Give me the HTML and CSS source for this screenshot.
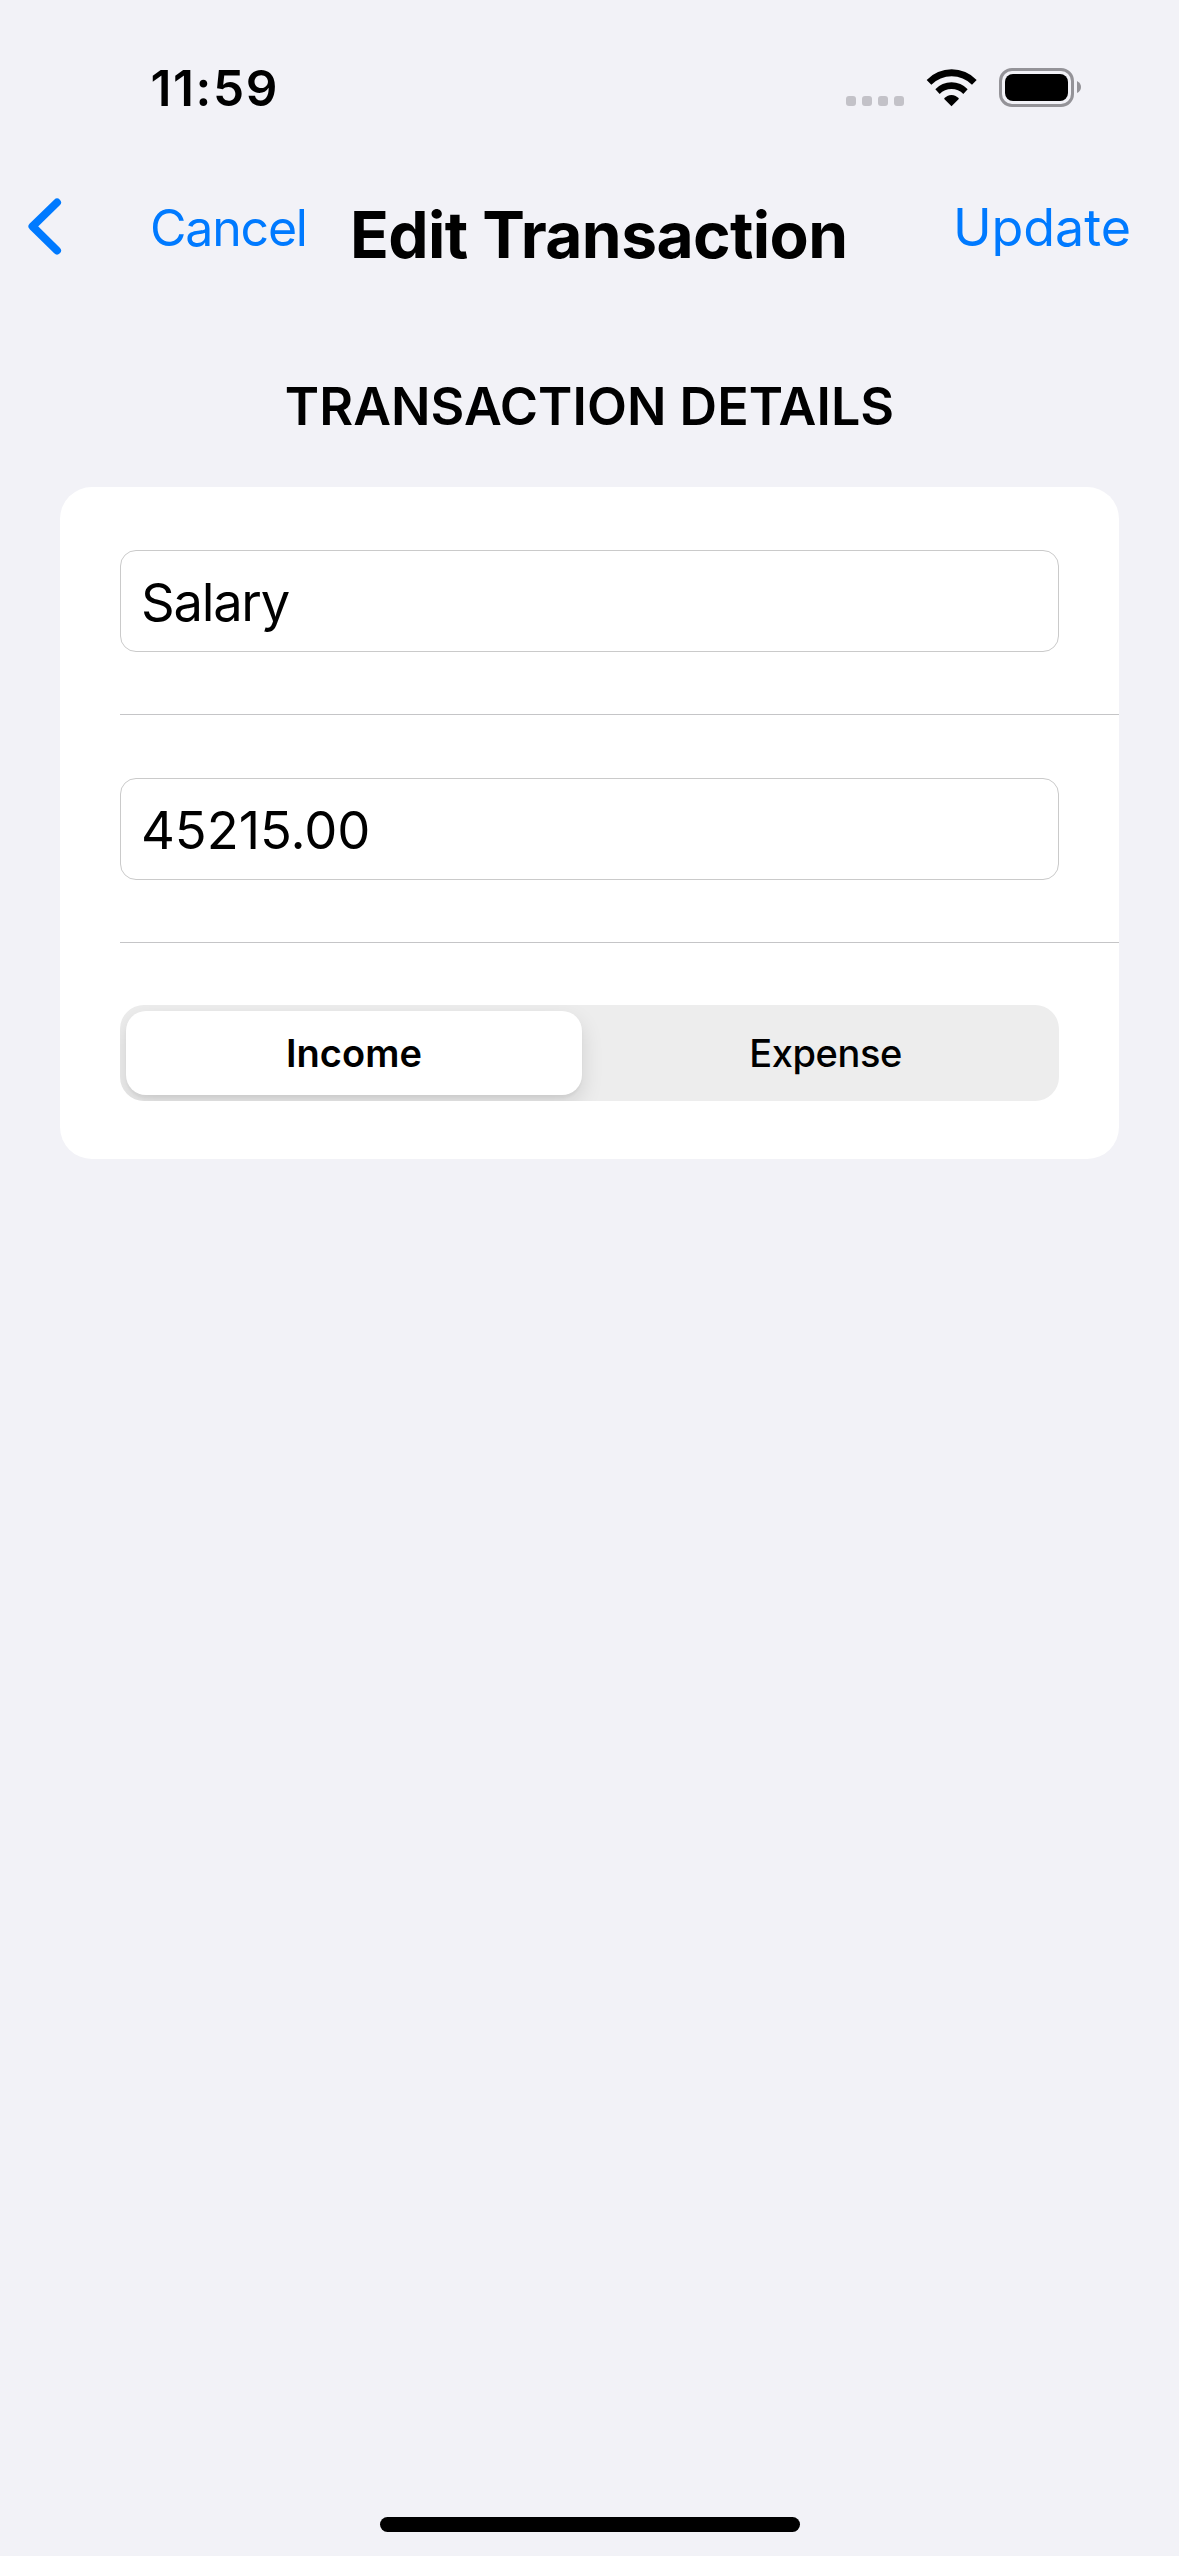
FILE: index.html
```html
<!DOCTYPE html>
<html lang="en">
<head>
<meta charset="utf-8">
<title>Edit Transaction</title>
<link rel="stylesheet" href="styles.css">
</head>
<body>
<header class="status">
  <div class="time">11:59</div>
  <div class="signal"><i></i><i></i><i></i><i></i></div>
  <svg class="wifi" viewBox="318 86 153 114" aria-hidden="true">
    <path d="M320 119A104 104 0 0 1 470 119L456 133A87 87 0 0 0 334 133Z"/>
    <path d="M346 147A66 66 0 0 1 443 147L430 161A49.5 49.5 0 0 0 359 161Z"/>
    <path d="M372 175A29 29 0 0 1 417 175L394.500 198Z"/>
  </svg>
  <div class="battery"><div class="charge"></div></div>
  <svg class="nub" viewBox="0 0 4 12" aria-hidden="true"><path d="M0 0Q4 2 4 6T0 12Z"/></svg>
</header>
<nav class="nav">
  <svg class="back" viewBox="0 0 34 57" aria-hidden="true"><path d="M29 4.500L4.500 28.300L29 52.500"/></svg>
  <a class="cancel">Cancel</a>
  <h1 class="title">Edit Transaction</h1>
  <a class="update">Update</a>
</nav>
<main>
  <h2 class="section">TRANSACTION DETAILS</h2>
  <section class="card">
    <div class="row"><div class="field name">Salary</div></div>
    <div class="row"><div class="field amount">45215.00</div></div>
    <div class="segmented">
      <div class="segment selected">Income</div>
      <div class="segment">Expense</div>
    </div>
  </section>
</main>
<div class="home"></div>
</body>
</html>
```
FILE: styles.css
```css
* { box-sizing: border-box; }

body {
  margin: 0;
  width: 1179px;
  height: 2556px;
  display: flex;
  flex-direction: column;
  background: #f2f2f7;
  color: #000;
  font-family: Inter, "Liberation Sans", sans-serif;
}

h1, h2 { margin: 0; }

.status {
  display: flex;
  align-items: flex-start;
  height: 170px;
  padding: 58px 98px 0 150.500px;
}

.time {
  flex: 1;
  font-size: 49.5px;
  font-weight: 600;
  line-height: 60px;
  letter-spacing: 1.6px;
}

.signal {
  display: flex;
  gap: 6px;
  margin-top: 38px;
}

.signal i {
  width: 10px;
  height: 10px;
  border-radius: 3px;
  background: #c3c2c8;
}

.wifi {
  width: 51px;
  height: 38px;
  margin: 10.700px 0 0 22px;
}

.battery {
  width: 75px;
  height: 39px;
  margin: 10px 0 0 22px;
  padding: 3px;
  border: 3px solid #949398;
  border-radius: 13px;
}

.charge {
  height: 27px;
  border-radius: 8px;
  background: #000;
}

.nub {
  width: 4px;
  height: 12px;
  margin: 23px 0 0 3px;
  fill: #949398;
}

.nav {
  display: flex;
  align-items: flex-start;
  height: 200px;
  padding: 28px 48px 0 27.500px;
}

.back {
  width: 34px;
  height: 57px;
  fill: none;
  stroke: #007aff;
  stroke-width: 8;
  stroke-linecap: round;
  stroke-linejoin: round;
}

.cancel, .update {
  color: #007aff;
  line-height: 60px;
}

.cancel {
  width: 200px;
  margin-left: 88.500px;
  font-size: 50px;
  letter-spacing: -1.2px;
}

.title {
  flex: 1;
  padding-top: 5px;
  font-size: 64px;
  font-weight: 700;
  line-height: 64px;
  letter-spacing: -0.59px;
  white-space: nowrap;
}

.update {
  font-size: 52px;
  letter-spacing: -0.05px;
}

main { flex: 1; }

.section {
  height: 117px;
  padding-top: 7px;
  font-size: 52px;
  font-weight: 600;
  line-height: 60px;
  letter-spacing: 0.05px;
  text-align: center;
}

.card {
  height: 672px;
  margin: 0 60px;
  padding-left: 60px;
  border-radius: 32px;
  background: #fff;
}

.row {
  height: 228px;
  padding: 63px 60px 0 0;
  border-bottom: 1px solid #c5c5c7;
}

.field {
  height: 102px;
  padding-left: 20px;
  border: 1px solid #cacaca;
  border-radius: 16px;
  font-size: 52.5px;
  line-height: 102px;
}

.name { letter-spacing: -1.25px; }
.amount { letter-spacing: -0.05px; }

.segmented {
  display: flex;
  gap: 16px;
  width: 939px;
  height: 96px;
  margin-top: 62px;
  padding: 6px;
  border-radius: 24px;
  background: #ededed;
  overflow: hidden;
}

.segment {
  flex: 1;
  font-size: 38px;
  font-weight: 500;
  line-height: 84px;
  letter-spacing: -0.4px;
  text-align: center;
}

.selected {
  flex: 0 0 456px;
  border-radius: 20px;
  background: #fff;
  font-weight: 600;
  letter-spacing: 0.05px;
  box-shadow: 0 9px 22px rgba(0, 0, 0, 0.12), 0 3px 3px rgba(0, 0, 0, 0.04);
}

.home {
  width: 420px;
  height: 15px;
  margin: 0 auto 24px 380px;
  border-radius: 8px;
  background: #000;
}
```
